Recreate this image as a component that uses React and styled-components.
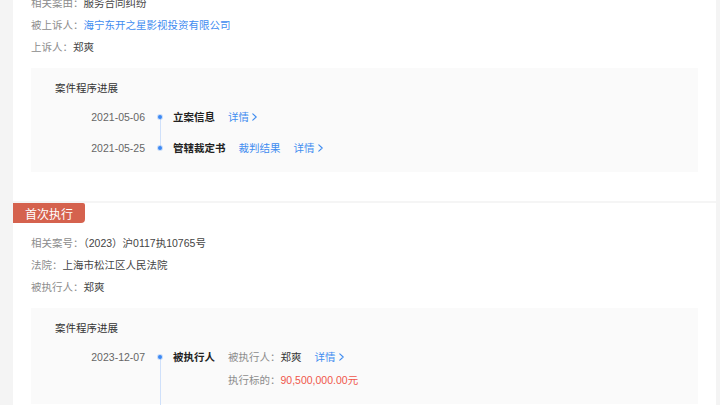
import React from "react";
import styled, { createGlobalStyle } from "styled-components";

const GlobalStyle = createGlobalStyle`
  html, body { margin: 0; padding: 0; }
  body {
    background: #f4f4f4;
    font-family: "Liberation Sans", "Noto Sans CJK SC", sans-serif;
    -webkit-font-smoothing: antialiased;
  }
`;

const Viewport = styled.div`
  height: 405px;
  overflow: hidden;
  padding: 0 4px 0 13px;
`;

const Column = styled.div`
  background: #fff;
  margin-top: -8px;
`;

const Card = styled.section`
  padding: 0 18px 29px;
  border-top: ${(p) => (p.$divider ? "2px solid #f5f5f5" : "none")};
`;

const Tag = styled.div`
  display: inline-flex;
  align-items: center;
  height: 20px;
  margin-left: -18px;
  padding: 0 12px;
  background: #d5624e;
  color: #fff;
  font-size: 12px;
  border-radius: 0 2px 4px 0;
`;

const InfoList = styled.div`
  margin-top: ${(p) => p.$top || 0}px;
  display: flex;
  flex-direction: column;
`;

const InfoRow = styled.div`
  line-height: 22px;
  font-size: 10.5px;
  color: #444;
  white-space: nowrap;
`;

const Label = styled.span`
  color: #8c8c8c;
`;

const Link = styled.a`
  color: #3f8cf0;
  text-decoration: none;
  display: inline-flex;
  align-items: center;
  gap: 3px;
`;

const Panel = styled.div`
  margin-top: 10px;
  background: #fafafa;
  padding: 12px 24px 16px;
`;

const PanelTitle = styled.div`
  font-size: 10.5px;
  line-height: 16px;
  color: #333;
`;

const Timeline = styled.div`
  margin-top: 13px;
  display: flex;
  flex-direction: column;
  gap: 15px;
`;

const Item = styled.div`
  display: flex;
  font-size: 10.5px;
  line-height: 16px;
`;

const DateCol = styled.div`
  width: 90px;
  flex-shrink: 0;
  text-align: right;
  color: #666;
`;

const DotCol = styled.div`
  position: relative;
  width: 28px;
  flex-shrink: 0;
  &::before {
    content: "";
    position: absolute;
    left: 13px;
    top: 6px;
    width: 4px;
    height: 4px;
    border-radius: 50%;
    background: #3a88f5;
    box-shadow: 0 0 0 1px rgba(58, 136, 245, 0.25);
    z-index: 1;
  }
  &::after {
    content: "";
    display: ${(p) => (p.$line ? "block" : "none")};
    position: absolute;
    left: 14.5px;
    top: 8px;
    bottom: ${(p) => (p.$long ? -200 : -23)}px;
    width: 1px;
    background: #cfe0fa;
  }
`;

const Content = styled.div`
  display: flex;
  flex-direction: column;
  gap: 7px;
`;

const Line = styled.div`
  display: flex;
  align-items: center;
  gap: 13px;
  white-space: nowrap;
`;

const Title = styled.span`
  color: #222;
  font-weight: 600;
  min-width: 41px;
  visibility: ${(p) => (p.$ghost ? "hidden" : "visible")};
`;

const Detail = styled.span`
  color: #333;
`;

const Amount = styled.span`
  color: #f0574a;
`;

const Chevron = () => (
  <svg width="5" height="8" viewBox="0 0 5 8" fill="none">
    <path d="M0.8 0.8 L4.2 4 L0.8 7.2" stroke="#3f8cf0" strokeWidth="1.1" strokeLinecap="round" strokeLinejoin="round" />
  </svg>
);

const More = ({ children = "详情" }) => (
  <Link href="#">
    {children}
    <Chevron />
  </Link>
);

export default function App() {
  return (
    <>
      <GlobalStyle />
      <Viewport>
        <Column>
          <Card>
            <InfoList>
              <InfoRow>
                <Label>相关案由：</Label>服务合同纠纷
              </InfoRow>
              <InfoRow>
                <Label>被上诉人：</Label>
                <Link href="#">海宁东开之星影视投资有限公司</Link>
              </InfoRow>
              <InfoRow>
                <Label>上诉人：</Label>郑爽
              </InfoRow>
            </InfoList>
            <Panel>
              <PanelTitle>案件程序进展</PanelTitle>
              <Timeline>
                <Item>
                  <DateCol>2021-05-06</DateCol>
                  <DotCol $line />
                  <Content>
                    <Line>
                      <Title>立案信息</Title>
                      <More />
                    </Line>
                  </Content>
                </Item>
                <Item>
                  <DateCol>2021-05-25</DateCol>
                  <DotCol />
                  <Content>
                    <Line>
                      <Title>管辖裁定书</Title>
                      <Link href="#">裁判结果</Link>
                      <More />
                    </Line>
                  </Content>
                </Item>
              </Timeline>
            </Panel>
          </Card>
          <Card $divider>
            <Tag>首次执行</Tag>
            <InfoList $top={9}>
              <InfoRow>
                <Label>相关案号：</Label>（2023）沪0117执10765号
              </InfoRow>
              <InfoRow>
                <Label>法院：</Label>上海市松江区人民法院
              </InfoRow>
              <InfoRow>
                <Label>被执行人：</Label>郑爽
              </InfoRow>
            </InfoList>
            <Panel>
              <PanelTitle>案件程序进展</PanelTitle>
              <Timeline>
                <Item>
                  <DateCol>2023-12-07</DateCol>
                  <DotCol $line $long />
                  <Content>
                    <Line>
                      <Title>被执行人</Title>
                      <span>
                        <Label>被执行人：</Label>
                        <Detail>郑爽</Detail>
                      </span>
                      <More />
                    </Line>
                    <Line>
                      <Title $ghost>被执行人</Title>
                      <span>
                        <Label>执行标的：</Label>
                        <Amount>90,500,000.00元</Amount>
                      </span>
                    </Line>
                  </Content>
                </Item>
              </Timeline>
            </Panel>
          </Card>
        </Column>
      </Viewport>
    </>
  );
}
